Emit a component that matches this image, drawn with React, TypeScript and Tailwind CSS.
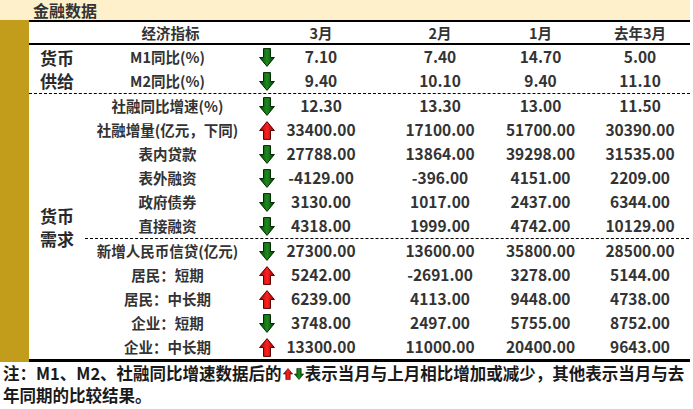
import React from "react";

const font = { fontFamily: '"Noto Sans CJK SC", "Noto Sans", sans-serif' };

function Arrow({ up, small }: { up?: boolean; small?: boolean }) {
  const id = up ? "gUp" : "gDown";
  const w = small ? 10 : 16;
  const h = small ? 14 : 19;
  const pts = up
    ? "8,0.6 15.4,9.5 11.5,9.5 11.5,18.4 4.5,18.4 4.5,9.5 0.6,9.5"
    : "4.5,0.6 11.5,0.6 11.5,9.5 15.4,9.5 8,18.4 0.6,9.5 4.5,9.5";
  return (
    <svg width={w} height={h} viewBox="0 0 16 19" className="inline-block">
      <defs>
        <linearGradient id={id} x1="0" y1="0" x2="1" y2="0">
          {up ? (
            <>
              <stop offset="0" stopColor="#a00000" />
              <stop offset="0.5" stopColor="#ff2020" />
              <stop offset="1" stopColor="#900000" />
            </>
          ) : (
            <>
              <stop offset="0" stopColor="#004000" />
              <stop offset="0.5" stopColor="#1f8a1f" />
              <stop offset="1" stopColor="#003a00" />
            </>
          )}
        </linearGradient>
      </defs>
      <polygon
        points={pts}
        fill={`url(#${id})`}
        stroke={up ? "#5a0000" : "#002a00"}
        strokeWidth="1"
      />
    </svg>
  );
}

type Row = { name: string; up: boolean; v: string[] };

const supply: Row[] = [
  { name: "M1同比(%)", up: false, v: ["7.10", "7.40", "14.70", "5.00"] },
  { name: "M2同比(%)", up: false, v: ["9.40", "10.10", "9.40", "11.10"] },
];

const social: Row[] = [
  { name: "社融同比增速(%)", up: false, v: ["12.30", "13.30", "13.00", "11.50"] },
  { name: "社融增量(亿元，下同)", up: true, v: ["33400.00", "17100.00", "51700.00", "30390.00"] },
  { name: "表内贷款", up: false, v: ["27788.00", "13864.00", "39298.00", "31535.00"] },
  { name: "表外融资", up: false, v: ["-4129.00", "-396.00", "4151.00", "2209.00"] },
  { name: "政府债券", up: false, v: ["3130.00", "1017.00", "2437.00", "6344.00"] },
  { name: "直接融资", up: false, v: ["4318.00", "1999.00", "4742.00", "10129.00"] },
];

const loans: Row[] = [
  { name: "新增人民币信贷(亿元)", up: false, v: ["27300.00", "13600.00", "35800.00", "28500.00"] },
  { name: "居民：短期", up: true, v: ["5242.00", "-2691.00", "3278.00", "5144.00"] },
  { name: "居民：中长期", up: true, v: ["6239.00", "4113.00", "9448.00", "4738.00"] },
  { name: "企业：短期", up: false, v: ["3748.00", "2497.00", "5755.00", "8752.00"] },
  { name: "企业：中长期", up: true, v: ["13300.00", "11000.00", "20400.00", "9643.00"] },
];

const cols = "grid grid-cols-[165px_32px_78px_130px_101px_98px] items-center";

function DataRow({ r }: { r: Row }) {
  return (
    <div className={`${cols} h-[24px]`}>
      <div className="text-center whitespace-nowrap text-[14.5px]">{r.name}</div>
      <div className="flex justify-center pl-[2px]">
        <Arrow up={r.up} />
      </div>
      <div className="text-center whitespace-nowrap text-[15.5px]">{r.v[0]}</div>
      <div className="text-center whitespace-nowrap pl-[30px] text-[15.5px]">{r.v[1]}</div>
      <div className="text-center whitespace-nowrap text-[15.5px]">{r.v[2]}</div>
      <div className="text-center whitespace-nowrap text-[15.5px]">{r.v[3]}</div>
    </div>
  );
}

function Category({ a, b }: { a: string; b: string }) {
  return (
    <div className="w-[56px] flex flex-col justify-center pl-[11px] text-[17px] font-bold leading-[23px] text-[#2a2a2a]">
      <div>{a}</div>
      <div>{b}</div>
    </div>
  );
}

export default function App() {
  return (
    <div className="w-[693px] h-[409px] bg-white text-[#333]" style={font}>
      <div className="w-[690px] h-[20px] bg-[#fff0cc] pl-[33px] flex items-center text-[16px] font-bold leading-none text-[#333]">
        金融数据
      </div>
      <div className="flex w-[690px]">
        <div className="w-[29px] bg-[#c29d1c]" />
        <div className="flex-1 font-bold">
          <div className="border-t-2 border-b-2 border-black flex h-[25px] items-center">
            <div className="w-[56px]" />
            <div className={`${cols} text-[14.5px]`}>
              <div className="text-center pl-[6px]">经济指标</div>
              <div />
              <div className="text-center">3月</div>
              <div className="text-center pl-[30px]">2月</div>
              <div className="text-center">1月</div>
              <div className="text-center">去年3月</div>
            </div>
          </div>
          <div className="flex border-b border-dashed border-black">
            <Category a="货币" b="供给" />
            <div>
              {supply.map((r) => (
                <DataRow key={r.name} r={r} />
              ))}
            </div>
          </div>
          <div className="flex border-b-[3px] border-black">
            <Category a="货币" b="需求" />
            <div>
              <div className="border-b border-dashed border-black">
                {social.map((r) => (
                  <DataRow key={r.name} r={r} />
                ))}
              </div>
              {loans.map((r) => (
                <DataRow key={r.name} r={r} />
              ))}
            </div>
          </div>
        </div>
      </div>
      <p className="w-[690px] pl-[3px] text-[16.5px] font-bold leading-[22px] text-[#1a1a1a]">
        注：M1、M2、社融同比增速数据后的
        <span className="inline-flex items-center gap-[1px] align-[-1px] mx-[1px]">
          <Arrow up small />
          <Arrow small />
        </span>
        表示当月与上月相比增加或减少，其他表示当月与去年同期的比较结果。
      </p>
    </div>
  );
}
